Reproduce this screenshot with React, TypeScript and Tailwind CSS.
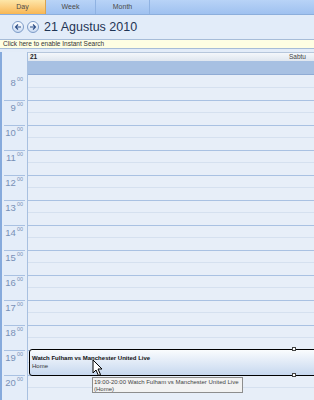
import React from "react";

const hours = [8, 9, 10, 11, 12, 13, 14, 15, 16, 17, 18, 19, 20];

function NavBtn({ dir }: { dir: "left" | "right" }) {
  return (
    <div className="w-[12px] h-[12px] rounded-full border border-[#7d9cc8] bg-gradient-to-b from-white to-[#c9daf2] flex items-center justify-center">
      <svg width="8" height="8" viewBox="0 0 8 8">
        {dir === "left" ? (
          <path d="M7 4H1.5M4 1.5L1.5 4L4 6.5" stroke="#2d4e86" strokeWidth="1.1" fill="none" />
        ) : (
          <path d="M1 4H6.5M4 1.5L6.5 4L4 6.5" stroke="#2d4e86" strokeWidth="1.1" fill="none" />
        )}
      </svg>
    </div>
  );
}

export default function App() {
  return (
    <div className="w-[314px] h-[400px] overflow-hidden relative bg-[#e3ecf8] font-['Liberation_Sans',Arial,sans-serif] text-[#222]">
      {/* Tabs */}
      <div className="h-[15px] flex bg-gradient-to-b from-[#b8d3f7] to-[#9fc1f0] border-b border-[#8caedc]">
        <div className="w-[46px] h-full flex items-center justify-center text-[7px] text-[#4a4a4a] bg-gradient-to-b from-[#fde6a8] to-[#f8b652] border-r border-[#d9a450]">
          Day
        </div>
        <div className="w-[50px] h-full flex items-center justify-center text-[7px] text-[#4a4a4a] border-r border-[#8fb2e2]">
          Week
        </div>
        <div className="w-[54px] h-full flex items-center justify-center text-[7px] text-[#4a4a4a] border-r border-[#8fb2e2]">
          Month
        </div>
        <div className="flex-1" />
      </div>

      {/* Nav */}
      <div className="h-[24px] flex items-center bg-[#e2ecf9] pl-[12px]">
        <div className="flex items-center gap-[3px]">
          <NavBtn dir="left" />
          <NavBtn dir="right" />
        </div>
        <div className="ml-[5px] text-[12.5px] text-[#1f3555] leading-none pt-[1px]">21 Agustus 2010</div>
      </div>

      {/* Search */}
      <div className="h-[10px] border-y border-[#a6bcd8] bg-[#fefee3] flex items-center pl-[3px] text-[6.5px] text-[#333] leading-none">
        Click here to enable Instant Search
      </div>

      {/* Calendar body */}
      <div className="flex mt-[3px]">
        {/* Time column */}
        <div className="w-[28px] shrink-0 border-l-2 border-[#86aadc] bg-[#e4edf9] border-r border-r-[#a8c0e0]">
          <div className="h-[23px]" />
          {hours.map((h) => (
            <div
              key={h}
              className={`h-[25px] mx-[2px] ${h === 8 ? "border-t border-transparent" : "border-t border-[#a9c1e2]"} flex justify-end pr-[2px] pt-[1px] text-[#7890b6]`}
            >
              <span className="text-[9.5px] leading-none mt-[1px]">{h}</span>
              <span className="text-[5.5px] leading-none ml-[1px]">00</span>
            </div>
          ))}
        </div>

        {/* Day column */}
        <div className="flex-1 relative">
          <div className="h-[9px] border-t border-[#b6c6db] bg-gradient-to-b from-[#f4f7fb] to-[#dfe6ef] flex items-center justify-between px-[2px] text-[6.5px] leading-none">
            <span className="font-bold text-[#222]">21</span>
            <span className="text-[#444] pr-[6px]">Sabtu</span>
          </div>
          <div className="h-[14px] bg-[#a7c0e2] border-b border-[#8fabd4]" />
          {hours.map((h) => (
            <div key={h} className={`h-[25px] ${h === 8 ? "" : "border-t border-[#a9c1e2]"} bg-[#e7eef8]`}>
              <div className={`${h === 8 ? "h-[13px]" : "h-[12px]"} border-b border-[#d5e0ef]`} />
            </div>
          ))}

          {/* Event */}
          <div className="absolute left-[1px] top-[297px] w-[300px] h-[27px] rounded-l-[3px] border border-black bg-gradient-to-b from-[#fafcfe] to-[#c7d8ef] pl-[2px] pt-[4px] text-[6px] leading-[8px]">
            <div className="font-bold text-[#111] whitespace-nowrap">Watch Fulham vs Manchester United Live</div>
            <div className="text-[#333]">Home</div>
          </div>
          <div className="absolute left-[264px] top-[295px] w-[4px] h-[4px] bg-white border border-[#444]" />
          <div className="absolute left-[264px] top-[321px] w-[4px] h-[4px] bg-white border border-[#444]" />
        </div>
      </div>

      {/* Tooltip */}
      <div className="absolute left-[92px] top-[377px] w-[151px] h-[16px] bg-[#f2f2f2] border border-[#8d8d8d] px-[1px] text-[6px] leading-[7px] text-[#444] whitespace-nowrap pt-[1px]">
        <div>19:00-20:00 Watch Fulham vs Manchester United Live</div>
        <div>(Home)</div>
      </div>

      {/* Cursor */}
      <svg className="absolute left-[92px] top-[359px]" width="12" height="18" viewBox="0 0 12 18">
        <path d="M1 1 L1 14 L4 11 L6.5 16.5 L8.5 15.5 L6 10 L10 10 Z" fill="white" stroke="black" strokeWidth="1" strokeLinejoin="miter" />
      </svg>
    </div>
  );
}
